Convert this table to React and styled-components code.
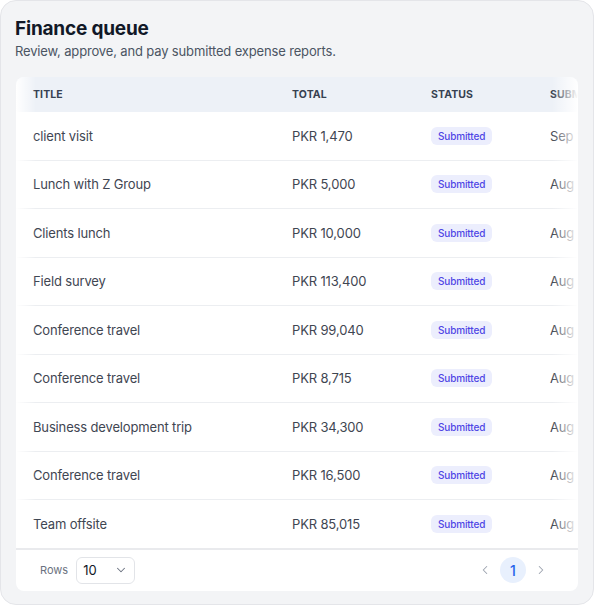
import React from 'react';
import styled, { createGlobalStyle } from 'styled-components';

const GlobalStyle = createGlobalStyle`
  html, body {
    margin: 0;
    padding: 0;
    background: #ffffff;
    font-family: Inter, "Noto Sans", sans-serif;
  }
`;

const Card = styled.div`
  box-sizing: border-box;
  width: 594px;
  background: #f3f4f6;
  border: 1px solid #e4e5e9;
  border-radius: 16px;
  padding: 15px 15px 13px 15px;
  display: flex;
  flex-direction: column;
`;

const Title = styled.h1`
  margin: 0 0 0 -1px;
  font-size: 19px;
  line-height: 26px;
  font-weight: 700;
  color: #111827;
  letter-spacing: -0.2px;
`;

const Subtitle = styled.p`
  margin: 0 0 0 -1px;
  font-size: 13px;
  line-height: 18px;
  color: #4b5563;
  letter-spacing: -0.15px;
`;

const Panel = styled.div`
  margin-top: 17px;
  background: #ffffff;
  border-radius: 8px;
  overflow: hidden;
  display: flex;
  flex-direction: column;
`;

const ScrollArea = styled.div`
  position: relative;
  overflow: hidden;
`;

const Fade = styled.div`
  position: absolute;
  top: 0;
  bottom: 0;
  ${p => (p.side === 'left' ? 'left: 0;' : 'right: 0;')}
  width: ${p => (p.side === 'left' ? '20px' : '26px')};
  background: linear-gradient(
    ${p => (p.side === 'left' ? 'to right' : 'to left')},
    rgba(255, 255, 255, 1),
    rgba(255, 255, 255, 0)
  );
  pointer-events: none;
`;

const Table = styled.table`
  border-collapse: collapse;
  table-layout: fixed;
  width: 720px;
`;

const Col = styled.col`
  width: ${p => p.w}px;
`;

const HeadCell = styled.th`
  background: #edf1f7;
  text-align: left;
  height: 35px;
  padding: 0 17px;
  font-size: 10.5px;
  font-weight: 700;
  color: #374151;
  letter-spacing: 0.1px;
  text-transform: uppercase;
  white-space: nowrap;
`;

const Row = styled.tr`
  border-bottom: 1px solid #eceef1;
  &:last-child {
    border-bottom: none;
  }
`;

const Cell = styled.td`
  height: 47.5px;
  padding: 0 17px;
  font-size: 13px;
  letter-spacing: -0.15px;
  color: #3f4652;
  white-space: nowrap;
  overflow: hidden;
`;

const Badge = styled.span`
  display: inline-block;
  padding: 3px 7px;
  border-radius: 6px;
  background: #eceefd;
  color: #4f46e5;
  font-size: 10px;
  line-height: 12px;
  font-weight: 500;
`;

const Footer = styled.div`
  border-top: 2px solid #e9eaed;
  height: 41px;
  display: flex;
  align-items: center;
  justify-content: space-between;
  padding: 0 24px 0 24px;
`;

const RowsPicker = styled.div`
  display: flex;
  align-items: center;
  gap: 8px;
  font-size: 11px;
  color: #6b7280;
`;

const Select = styled.div`
  box-sizing: border-box;
  width: 59px;
  height: 27px;
  border: 1px solid #e2e4e8;
  border-radius: 6px;
  display: flex;
  align-items: center;
  justify-content: space-between;
  padding: 0 6px 0 6px;
  font-size: 13px;
  color: #111827;
  background: #fff;
`;

const Pager = styled.div`
  display: flex;
  align-items: center;
  gap: 2px;
`;

const PageButton = styled.div`
  width: 26px;
  height: 26px;
  border-radius: 50%;
  display: flex;
  align-items: center;
  justify-content: center;
  font-size: 14px;
  font-weight: 500;
  background: ${p => (p.active ? '#e8f0fd' : 'transparent')};
  color: ${p => (p.active ? '#2563eb' : '#9ca3af')};
`;

const Chevron = ({ dir }) => (
  <svg width="14" height="14" viewBox="0 0 24 24" fill="none" stroke="currentColor" strokeWidth="1.8" strokeLinecap="round" strokeLinejoin="round">
    {dir === 'left' && <path d="M15 18l-6-6 6-6" />}
    {dir === 'right' && <path d="M9 18l6-6-6-6" />}
    {dir === 'down' && <path d="M6 9l6 6 6-6" />}
  </svg>
);

const rows = [
  { title: 'client visit', total: 'PKR 1,470', date: 'Sep 12, 2025' },
  { title: 'Lunch with Z Group', total: 'PKR 5,000', date: 'Aug 29, 2025' },
  { title: 'Clients lunch', total: 'PKR 10,000', date: 'Aug 27, 2025' },
  { title: 'Field survey', total: 'PKR 113,400', date: 'Aug 25, 2025' },
  { title: 'Conference travel', total: 'PKR 99,040', date: 'Aug 22, 2025' },
  { title: 'Conference travel', total: 'PKR 8,715', date: 'Aug 20, 2025' },
  { title: 'Business development trip', total: 'PKR 34,300', date: 'Aug 18, 2025' },
  { title: 'Conference travel', total: 'PKR 16,500', date: 'Aug 14, 2025' },
  { title: 'Team offsite', total: 'PKR 85,015', date: 'Aug 11, 2025' },
];

export default function App() {
  return (
    <>
      <GlobalStyle />
      <Card>
        <Title>Finance queue</Title>
        <Subtitle>Review, approve, and pay submitted expense reports.</Subtitle>
        <Panel>
          <ScrollArea>
            <Table>
              <colgroup>
                <Col w={259} />
                <Col w={139} />
                <Col w={119} />
                <Col w={203} />
              </colgroup>
              <thead>
                <tr>
                  <HeadCell>Title</HeadCell>
                  <HeadCell>Total</HeadCell>
                  <HeadCell>Status</HeadCell>
                  <HeadCell>Submitted</HeadCell>
                </tr>
              </thead>
              <tbody>
                {rows.map((r, i) => (
                  <Row key={i}>
                    <Cell>{r.title}</Cell>
                    <Cell>{r.total}</Cell>
                    <Cell><Badge>Submitted</Badge></Cell>
                    <Cell>{r.date}</Cell>
                  </Row>
                ))}
              </tbody>
            </Table>
            <Fade side="left" />
            <Fade side="right" />
          </ScrollArea>
          <Footer>
            <RowsPicker>
              Rows
              <Select>
                10
                <span style={{ color: '#6b7280', display: 'flex' }}><Chevron dir="down" /></span>
              </Select>
            </RowsPicker>
            <Pager>
              <PageButton><Chevron dir="left" /></PageButton>
              <PageButton active>1</PageButton>
              <PageButton><Chevron dir="right" /></PageButton>
            </Pager>
          </Footer>
        </Panel>
      </Card>
    </>
  );
}
